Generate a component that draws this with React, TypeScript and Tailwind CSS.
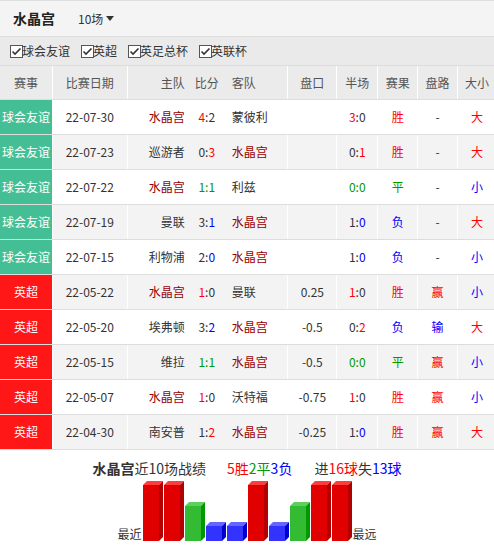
import React from "react";

type Row = {
  comp: "球会友谊" | "英超";
  date: string;
  home: string;
  away: string;
  hg: number;
  ag: number;
  pan: string;
  hh: number;
  ha: number;
  res: "胜" | "平" | "负";
  lu: "赢" | "输" | "-";
  dx: "大" | "小";
};

const CP = "水晶宫";

const rows: Row[] = [
  { comp: "球会友谊", date: "22-07-30", home: CP, away: "蒙彼利", hg: 4, ag: 2, pan: "", hh: 3, ha: 0, res: "胜", lu: "-", dx: "大" },
  { comp: "球会友谊", date: "22-07-23", home: "巡游者", away: CP, hg: 0, ag: 3, pan: "", hh: 0, ha: 1, res: "胜", lu: "-", dx: "大" },
  { comp: "球会友谊", date: "22-07-22", home: CP, away: "利兹", hg: 1, ag: 1, pan: "", hh: 0, ha: 0, res: "平", lu: "-", dx: "小" },
  { comp: "球会友谊", date: "22-07-19", home: "曼联", away: CP, hg: 3, ag: 1, pan: "", hh: 1, ha: 0, res: "负", lu: "-", dx: "大" },
  { comp: "球会友谊", date: "22-07-15", home: "利物浦", away: CP, hg: 2, ag: 0, pan: "", hh: 1, ha: 0, res: "负", lu: "-", dx: "小" },
  { comp: "英超", date: "22-05-22", home: CP, away: "曼联", hg: 1, ag: 0, pan: "0.25", hh: 1, ha: 0, res: "胜", lu: "赢", dx: "小" },
  { comp: "英超", date: "22-05-20", home: "埃弗顿", away: CP, hg: 3, ag: 2, pan: "-0.5", hh: 0, ha: 2, res: "负", lu: "输", dx: "大" },
  { comp: "英超", date: "22-05-15", home: "维拉", away: CP, hg: 1, ag: 1, pan: "-0.5", hh: 0, ha: 0, res: "平", lu: "赢", dx: "小" },
  { comp: "英超", date: "22-05-07", home: CP, away: "沃特福", hg: 1, ag: 0, pan: "-0.75", hh: 1, ha: 0, res: "胜", lu: "赢", dx: "小" },
  { comp: "英超", date: "22-04-30", home: "南安普", away: CP, hg: 1, ag: 2, pan: "-0.25", hh: 1, ha: 0, res: "胜", lu: "赢", dx: "大" },
];

const RED = "text-[#ff0000]";
const BLUE = "text-[#0000ff]";
const GREEN = "text-[#009900]";

function Score({ h, a, cpHome }: { h: number; a: number; cpHome: boolean }) {
  if (h === a) {
    return (
      <span className={GREEN}>
        {h}:{a}
      </span>
    );
  }
  const cpGoals = cpHome ? h : a;
  const other = cpHome ? a : h;
  const cls = cpGoals > other ? RED : BLUE;
  if (cpHome) {
    return (
      <span>
        <span className={cls}>{h}</span>:{a}
      </span>
    );
  }
  return (
    <span>
      {h}:<span className={cls}>{a}</span>
    </span>
  );
}

function Team({ name }: { name: string }) {
  return <span className={name === CP ? "text-[#990000]" : "text-[#333]"}>{name}</span>;
}

function CheckBox() {
  return (
    <svg width="13" height="13" viewBox="0 0 13 13" className="shrink-0">
      <rect x="0.5" y="0.5" width="12" height="12" fill="#fff" stroke="#555" />
      <path d="M2.5 6.5 L5 9 L10.5 3.5" fill="none" stroke="#333" strokeWidth="1.6" />
    </svg>
  );
}

const barColors = {
  W: { front: "#e00000", top: "#ff3d3d", side: "#b30000" },
  D: { front: "#33bb33", top: "#5ccf5c", side: "#009900" },
  L: { front: "#3333ff", top: "#6666ff", side: "#0000d0" },
};

function Bar({ kind }: { kind: "W" | "D" | "L" }) {
  const H = kind === "W" ? 56 : kind === "D" ? 35 : 15;
  const c = barColors[kind];
  return (
    <svg width="20" height={H + 4} viewBox={`0 0 20 ${H + 4}`} className="block shrink-0">
      <polygon points={`0,4 4,0 20,0 16,4`} fill={c.top} />
      <polygon points={`16,4 20,0 20,${H} 16,${H + 4}`} fill={c.side} />
      <rect x="0" y="4" width="16" height={H} fill={c.front} />
    </svg>
  );
}

export default function App() {
  const font = { fontFamily: '"Noto Sans CJK SC", "Noto Sans", sans-serif' };
  return (
    <div className="w-[494px] h-[547px] overflow-hidden bg-white text-[12px] text-[#333]" style={font}>
      {/* title bar */}
      <div className="h-[37px] bg-[#f4f4f4] border-t border-b border-[#dddddd] flex items-center">
        <span className="ml-[13px] text-[14px] font-bold text-[#222]">水晶宫</span>
        <span className="ml-[23px] text-[12px] text-[#333] flex items-center">
          10场
          <svg width="8" height="5" viewBox="0 0 8 5" className="ml-[3px]">
            <polygon points="0,0 8,0 4,5" fill="#333" />
          </svg>
        </span>
      </div>
      {/* filter row */}
      <div className="h-[28px] bg-[#eaeaea] flex items-center pl-[10px] gap-[11px] text-[#333]">
        {["球会友谊", "英超", "英足总杯", "英联杯"].map((t) => (
          <label key={t} className="flex items-center">
            <CheckBox />
            <span className="ml-[-1px]">{t}</span>
          </label>
        ))}
      </div>
      {/* table */}
      <div className="w-[496px]">
        <div className="h-[35px] flex bg-[#ebebeb] border-t border-b border-[#dddddd] text-[#555]">
          <div className="w-[53px] border-r border-white flex items-center justify-center">赛事</div>
          <div className="w-[75px] border-r border-white flex items-center justify-center">比赛日期</div>
          <div className="w-[161px] border-r border-white flex items-center">
            <div className="w-[62px] text-right pr-[5px]">主队</div>
            <div className="w-[34px] text-center">比分</div>
            <div className="pl-[8px]">客队</div>
          </div>
          <div className="w-[49px] border-r border-white flex items-center justify-center">盘口</div>
          <div className="w-[41px] border-r border-white flex items-center justify-center">半场</div>
          <div className="w-[40px] border-r border-white flex items-center justify-center">赛果</div>
          <div className="w-[40px] border-r border-white flex items-center justify-center">盘路</div>
          <div className="w-[38px] flex items-center justify-center">大小</div>
        </div>
        {rows.map((r, i) => {
          const cpHome = r.home === CP;
          const resCls = r.res === "胜" ? RED : r.res === "平" ? GREEN : BLUE;
          const luCls = r.lu === "赢" ? RED : r.lu === "输" ? BLUE : "text-[#333]";
          const dxCls = r.dx === "大" ? RED : BLUE;
          return (
            <div
              key={i}
              className={`h-[35px] flex border-b border-[#dddddd] ${i % 2 === 1 ? "bg-[#f3f3f3]" : "bg-white"}`}
            >
              <div
                className={`w-[53px] border-r border-white flex items-center justify-center text-white ${
                  r.comp === "英超" ? "bg-[#ff1616]" : "bg-[#44bf95]"
                }`}
              >
                {r.comp}
              </div>
              <div className="w-[75px] border-r border-white flex items-center justify-center text-[#333]">{r.date}</div>
              <div className="w-[161px] border-r border-white flex items-center">
                <div className="w-[62px] text-right pr-[5px]">
                  <Team name={r.home} />
                </div>
                <div className="w-[34px] text-center text-[#333]">
                  <Score h={r.hg} a={r.ag} cpHome={cpHome} />
                </div>
                <div className="pl-[8px]">
                  <Team name={r.away} />
                </div>
              </div>
              <div className="w-[49px] border-r border-white flex items-center justify-center text-[#333]">{r.pan}</div>
              <div className="w-[41px] border-r border-white flex items-center justify-center text-[#333]">
                <Score h={r.hh} a={r.ha} cpHome={cpHome} />
              </div>
              <div className={`w-[40px] border-r border-white flex items-center justify-center ${resCls}`}>{r.res}</div>
              <div className={`w-[40px] border-r border-white flex items-center justify-center ${luCls}`}>{r.lu}</div>
              <div className={`w-[38px] flex items-center justify-center ${dxCls}`}>{r.dx}</div>
            </div>
          );
        })}
      </div>
      {/* summary */}
      <div className="mt-[8px] flex justify-center text-[14px] leading-[20px] text-[#333]">
        <span>
          <span className="font-bold">水晶宫</span>近10场战绩
        </span>
        <span className="ml-[21px]">
          <span className="text-[#ff0000]">5胜</span>
          <span className="text-[#009900]">2平</span>
          <span className="text-[#0000ff]">3负</span>
        </span>
        <span className="ml-[22px]">
          进<span className="text-[#ff0000]">16球</span>失<span className="text-[#0000ff]">13球</span>
        </span>
      </div>
      <div className="mt-[3px] flex justify-center items-end gap-[1px]">
        <span className="text-[12px] leading-[14px] mr-[0px]">最近</span>
        {(["W", "W", "D", "L", "L", "W", "L", "D", "W", "W"] as const).map((k, i) => (
          <Bar key={i} kind={k} />
        ))}
        <span className="text-[12px] leading-[14px] ml-[0px]">最远</span>
      </div>
    </div>
  );
}
